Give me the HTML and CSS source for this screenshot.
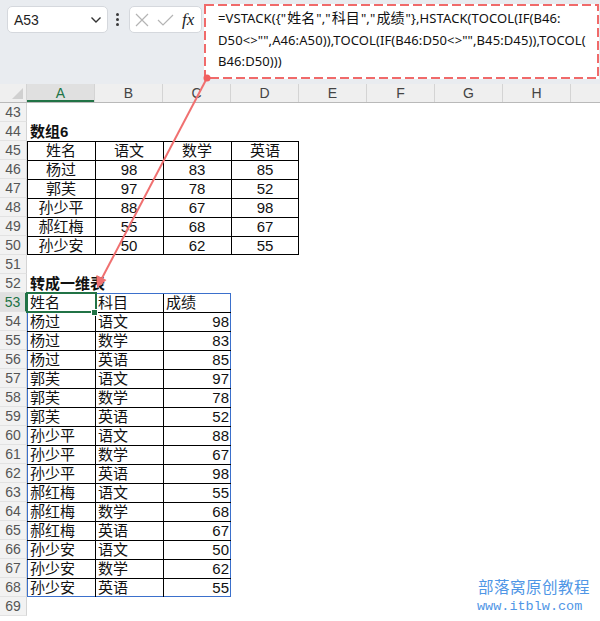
FILE: index.html
```html
<!DOCTYPE html>
<html lang="zh">
<head>
<meta charset="utf-8">
<title>VSTACK</title>
<link rel="stylesheet" href="styles.css">
</head>
<body>
<div class="app">
  <div class="topbar">
    <div class="namebox">
      <span>A53</span>
      <svg class="chev" width="12" height="8" viewBox="0 0 12 8"><path d="M1.5 1.5 L6 6 L10.5 1.5" fill="none" stroke="#333" stroke-width="1.4"/></svg>
    </div>
    <div class="vdots"><i></i><i></i><i></i></div>
    <div class="fxbox">
      <svg width="14" height="14" viewBox="0 0 14 14"><path d="M1 1 L13 13 M13 1 L1 13" stroke="#b4b4b4" stroke-width="1.2" fill="none"/></svg>
      <svg width="17" height="12" viewBox="0 0 17 12"><path d="M1 6 L6 11 L16 1" stroke="#b4b4b4" stroke-width="1.2" fill="none"/></svg>
      <span class="fx">fx</span>
    </div>
    <div class="formula">
      <svg class="dash" width="395" height="75" viewBox="0 0 395 75"><rect x="1" y="1" width="393" height="73" fill="none" stroke="#f06a6a" stroke-width="2" stroke-dasharray="9 4"/></svg>
      <div class="ftext">=VSTACK({"<span class="cjk">姓名</span>","<span class="cjk">科目</span>","<span class="cjk">成绩</span>"},HSTACK(TOCOL(IF(B46:<br>D50&lt;&gt;"",A46:A50)),TOCOL(IF(B46:D50&lt;&gt;"",B45:D45)),TOCOL(<br>B46:D50)))</div>
    </div>
  </div>

  <div class="sheet">
    <div class="row head">
      <div class="corner"><span class="tri"></span></div>
      <div class="ch sel">A</div><div class="ch">B</div><div class="ch">C</div><div class="ch">D</div>
      <div class="ch">E</div><div class="ch">F</div><div class="ch">G</div><div class="ch">H</div><div class="ch last"></div>
    </div>

    <div class="row"><div class="rh">43</div></div>
    <div class="row"><div class="rh">44</div><div class="c bold">数组6</div></div>
    <div class="row"><div class="rh">45</div><div class="c g ctr">姓名</div><div class="c g ctr">语文</div><div class="c g ctr">数学</div><div class="c g ctr er">英语</div></div>
    <div class="row"><div class="rh">46</div><div class="c g ctr">杨过</div><div class="c g ctr">98</div><div class="c g ctr">83</div><div class="c g ctr er">85</div></div>
    <div class="row"><div class="rh">47</div><div class="c g ctr">郭芙</div><div class="c g ctr">97</div><div class="c g ctr">78</div><div class="c g ctr er">52</div></div>
    <div class="row"><div class="rh">48</div><div class="c g ctr">孙少平</div><div class="c g ctr">88</div><div class="c g ctr">67</div><div class="c g ctr er">98</div></div>
    <div class="row"><div class="rh">49</div><div class="c g ctr">郝红梅</div><div class="c g ctr">55</div><div class="c g ctr">68</div><div class="c g ctr er">67</div></div>
    <div class="row"><div class="rh">50</div><div class="c g ctr eb">孙少安</div><div class="c g ctr eb">50</div><div class="c g ctr eb">62</div><div class="c g ctr er eb">55</div></div>
    <div class="row"><div class="rh">51</div></div>
    <div class="row"><div class="rh">52</div><div class="c bold">转成一维表</div></div>
    <div class="row"><div class="rh sel">53</div><div class="c g sp top ca active">姓名</div><div class="c g sp top">科目</div><div class="c g sp top cc">成绩</div></div>
    <div class="row"><div class="rh">54</div><div class="c g sp ca">杨过</div><div class="c g sp">语文</div><div class="c g sp cc num">98</div></div>
    <div class="row"><div class="rh">55</div><div class="c g sp ca">杨过</div><div class="c g sp">数学</div><div class="c g sp cc num">83</div></div>
    <div class="row"><div class="rh">56</div><div class="c g sp ca">杨过</div><div class="c g sp">英语</div><div class="c g sp cc num">85</div></div>
    <div class="row"><div class="rh">57</div><div class="c g sp ca">郭芙</div><div class="c g sp">语文</div><div class="c g sp cc num">97</div></div>
    <div class="row"><div class="rh">58</div><div class="c g sp ca">郭芙</div><div class="c g sp">数学</div><div class="c g sp cc num">78</div></div>
    <div class="row"><div class="rh">59</div><div class="c g sp ca">郭芙</div><div class="c g sp">英语</div><div class="c g sp cc num">52</div></div>
    <div class="row"><div class="rh">60</div><div class="c g sp ca">孙少平</div><div class="c g sp">语文</div><div class="c g sp cc num">88</div></div>
    <div class="row"><div class="rh">61</div><div class="c g sp ca">孙少平</div><div class="c g sp">数学</div><div class="c g sp cc num">67</div></div>
    <div class="row"><div class="rh">62</div><div class="c g sp ca">孙少平</div><div class="c g sp">英语</div><div class="c g sp cc num">98</div></div>
    <div class="row"><div class="rh">63</div><div class="c g sp ca">郝红梅</div><div class="c g sp">语文</div><div class="c g sp cc num">55</div></div>
    <div class="row"><div class="rh">64</div><div class="c g sp ca">郝红梅</div><div class="c g sp">数学</div><div class="c g sp cc num">68</div></div>
    <div class="row"><div class="rh">65</div><div class="c g sp ca">郝红梅</div><div class="c g sp">英语</div><div class="c g sp cc num">67</div></div>
    <div class="row"><div class="rh">66</div><div class="c g sp ca">孙少安</div><div class="c g sp">语文</div><div class="c g sp cc num">50</div></div>
    <div class="row"><div class="rh">67</div><div class="c g sp ca">孙少安</div><div class="c g sp">数学</div><div class="c g sp cc num">62</div></div>
    <div class="row"><div class="rh">68</div><div class="c g sp ca bot">孙少安</div><div class="c g sp bot">英语</div><div class="c g sp cc bot num">55</div></div>
    <div class="row"><div class="rh">69</div></div>
  </div>

  <svg class="arrow" width="600" height="621" viewBox="0 0 600 621">
    <line x1="207" y1="78" x2="101" y2="280" stroke="#f07070" stroke-width="2"/>
    <polygon points="97,288 96.5,275 106.5,280" fill="#f07070"/>
    <circle cx="207" cy="78" r="3.5" fill="#f06060"/>
  </svg>

  <div class="watermark">
    <div class="wm1">部落窝原创教程</div>
    <div class="wm2">www.itblw.com</div>
  </div>
</div>
</body>
</html>
```

FILE: styles.css
```css
html, body {
  margin: 0;
  padding: 0;
}
body {
  width: 600px;
  height: 621px;
  overflow: hidden;
  background: #ffffff;
  font-family: "Liberation Sans", "Noto Sans CJK SC", sans-serif;
  color: #111;
}
.app {
  position: relative;
  width: 600px;
  height: 621px;
  overflow: hidden;
}

/* ---------- top bar ---------- */
.topbar {
  height: 84px;
  background: #e9ecf0;
  display: flex;
  align-items: flex-start;
}
.namebox {
  margin: 6px 0 0 7px;
  width: 101px;
  height: 27px;
  box-sizing: border-box;
  background: #fff;
  border: 1px solid #d5d8dd;
  border-radius: 5px;
  display: flex;
  align-items: center;
  justify-content: space-between;
  padding: 0 5px 0 6px;
  font-size: 14px;
  color: #1e1e1e;
}
.chev { margin-top: 1px; }
.vdots {
  margin: 13px 0 0 8px;
  width: 3px;
  display: flex;
  flex-direction: column;
  gap: 2px;
}
.vdots i {
  display: block;
  width: 3px;
  height: 3px;
  border-radius: 50%;
  background: #3a3a3a;
}
.fxbox {
  margin: 6px 0 0 10px;
  width: 73px;
  height: 27px;
  box-sizing: border-box;
  background: #fff;
  border: 1px solid #d5d8dd;
  border-radius: 5px;
  display: flex;
  align-items: center;
  padding: 0 0 0 5px;
  gap: 8px;
}
.fx {
  font-family: "Liberation Serif", "DejaVu Serif", serif;
  font-style: italic;
  font-size: 17px;
  color: #222;
}
.formula {
  position: relative;
  margin: 4px 0 0 2px;
  width: 395px;
  height: 75px;
  background: #fff;
  box-sizing: border-box;
}
.dash {
  position: absolute;
  left: 0;
  top: 0;
}
.ftext {
  padding: 3px 0 0 14px;
  font-family: "Noto Sans", "Noto Sans CJK SC", sans-serif;
  font-size: 13px;
  letter-spacing: 0.1px;
  line-height: 21.5px;
  color: #111;
  white-space: nowrap;
}
.ftext .cjk {
  font-family: "Noto Sans CJK SC", sans-serif;
  font-size: 14px;
  margin: 0 1px;
}

/* ---------- sheet ---------- */
.sheet {
  display: flex;
  flex-direction: column;
}
.row {
  display: grid;
  grid-template-columns: 27px repeat(8, 68px) 1fr;
  height: 19px;
}
.row.head {
  height: 19px;
  background: #efefef;
  border-bottom: 1px solid #b9b9b9;
  box-sizing: border-box;
}
.corner {
  position: relative;
  border-right: 1px solid #d4d4d4;
}
.tri {
  position: absolute;
  right: 3px;
  bottom: 3px;
  width: 0;
  height: 0;
  border-left: 11px solid transparent;
  border-bottom: 11px solid #d0d0d0;
}
.ch {
  border-right: 1px solid #d4d4d4;
  text-align: center;
  font-size: 14px;
  line-height: 18px;
  color: #444;
}
.ch.sel {
  background: #e0e0e0;
  color: #217346;
  box-shadow: inset 0 -2px 0 #217346;
}
.ch.last { border-right: none; }

.rh {
  background: #f2f2f2;
  border-right: 1px solid #d4d4d4;
  border-bottom: 1px solid #e2e2e2;
  box-sizing: border-box;
  text-align: center;
  font-size: 14px;
  line-height: 18px;
  color: #555;
}
.rh.sel {
  background: #e0e0e0;
  color: #217346;
  border-right: 2px solid #217346;
}

.c {
  --t: transparent;
  --l: transparent;
  --r: transparent;
  --b: transparent;
  font-size: 15px;
  line-height: 19px;
  padding: 0 3px;
  white-space: nowrap;
  box-shadow: inset 0 1px 0 var(--t), inset 1px 0 0 var(--l), inset -1px 0 0 var(--r), inset 0 -1px 0 var(--b);
}
.c.bold {
  font-weight: bold;
}
.c.g { --t: #000; --l: #000; }
.c.er { --r: #000; }
.c.eb { --b: #000; }
.c.ctr { text-align: center; }
.c.num { text-align: right; padding-right: 2px; }

/* spill range outline */
.c.sp.top { --t: #3b70cc; }
.c.sp.ca { --l: #3b70cc; }
.c.sp.cc { --r: #3b70cc; }
.c.sp.bot { --b: #3b70cc; }

.c.active { position: relative; }
.c.active::before {
  content: "";
  position: absolute;
  left: -1px;
  top: -1px;
  width: 71px;
  height: 21px;
  box-sizing: border-box;
  border: 2px solid #217346;
}
.c.active::after {
  content: "";
  position: absolute;
  left: 64px;
  top: 16px;
  width: 5px;
  height: 5px;
  background: #217346;
  border: 1px solid #fff;
}

/* ---------- overlays ---------- */
.arrow {
  position: absolute;
  left: 0;
  top: 0;
  pointer-events: none;
}
.watermark {
  position: absolute;
  right: 10px;
  bottom: 6px;
  color: #4f96e6;
}
.wm1 {
  font-size: 15.5px;
  letter-spacing: 0.5px;
  line-height: 20px;
  padding-left: 1px;
}
.wm2 {
  font-family: "Liberation Mono", "DejaVu Sans Mono", monospace;
  font-size: 13.5px;
  line-height: 17px;
}
```
